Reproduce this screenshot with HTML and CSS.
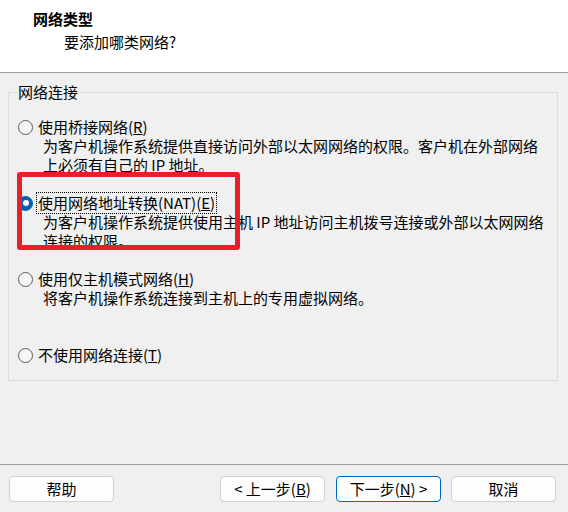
FILE: index.html
```html
<!DOCTYPE html>
<html lang="zh-CN">
<head>
  <meta charset="UTF-8">
  <meta name="viewport" content="width=device-width, initial-scale=1.0">
  <title>新建虚拟机向导 - 网络类型</title>
  <link rel="stylesheet" href="styles.css">
</head>
<body>
  <div class="dialog">
    <div class="header">
      <div class="title">网络类型</div>
      <div class="subtitle">要添加哪类网络?</div>
    </div>

    <div class="content">
      <fieldset class="group">
        <legend>网络连接</legend>

        <div class="option">
          <div class="choice"><span class="radio"></span><span class="label">使用桥接网络(<u>R</u>)</span></div>
          <p class="desc">为客户机操作系统提供直接访问外部以太网网络的权限。客户机在外部网络<br>上必须有自己的 IP 地址。</p>
        </div>

        <div class="option">
          <div class="choice"><span class="radio checked"></span><span class="label focused">使用网络地址转换(NAT)(<u>E</u>)</span></div>
          <p class="desc">为客户机操作系统提供使用主机 IP 地址访问主机拨号连接或外部以太网网络<br>连接的权限。</p>
          <div class="highlight"></div>
        </div>

        <div class="option">
          <div class="choice"><span class="radio"></span><span class="label">使用仅主机模式网络(<u>H</u>)</span></div>
          <p class="desc">将客户机操作系统连接到主机上的专用虚拟网络。</p>
        </div>

        <div class="option">
          <div class="choice"><span class="radio"></span><span class="label">不使用网络连接(<u>T</u>)</span></div>
        </div>
      </fieldset>
    </div>

    <div class="footer">
      <button class="btn">帮助</button>
      <div class="nav">
        <button class="btn">&lt; 上一步(<u>B</u>)</button>
        <button class="btn primary">下一步(<u>N</u>) &gt;</button>
        <button class="btn">取消</button>
      </div>
    </div>
  </div>
</body>
</html>
```

FILE: styles.css
```css
body {
  margin: 0;
  background: #f0f0f0;
  font-family: "Noto Sans CJK SC", "Noto Sans", sans-serif;
  font-size: 15px;
  line-height: 18px;
  color: #000;
}

.dialog {
  display: flex;
  flex-direction: column;
  height: 512px;
}

.header {
  height: 62px;
  padding-top: 10px;
  background: #fff;
  border-bottom: 1px solid #a0a0a0;
}

.title {
  padding-left: 33px;
  font-weight: bold;
}

.subtitle {
  margin-top: 5px;
  padding-left: 64px;
}

.content {
  flex: 1;
}

.group {
  margin: 10px 10px 0 8px;
  padding: 17px 8px 16px 8px;
  border: 1px solid #dcdcdc;
}

.group legend {
  padding: 0 1px;
}

.option {
  position: relative;
  min-height: 56px;
  margin-bottom: 20px;
}

.option:last-child {
  min-height: 0;
  margin-bottom: 0;
}

.choice {
  display: flex;
  align-items: center;
  height: 18px;
}

.radio {
  position: relative;
  box-sizing: border-box;
  width: 15px;
  height: 15px;
  margin-left: 1px;
  border: 1px solid #5c5c5c;
  border-radius: 50%;
  background: #f6f6f6;
}

.radio.checked {
  border-color: #005fb8;
  background: #005fb8;
}

.radio.checked::after {
  content: "";
  position: absolute;
  left: 3.5px;
  top: 3.5px;
  width: 6px;
  height: 6px;
  border-radius: 50%;
  background: #fff;
}

.label {
  display: inline-block;
  margin-left: 5px;
  white-space: nowrap;
}

.label.focused {
  outline: 1px dotted #000;
  outline-offset: 1px;
}

.desc {
  margin: 0;
  padding-left: 26px;
  line-height: 19px;
  white-space: nowrap;
}

.highlight {
  position: absolute;
  left: 0;
  top: -22px;
  width: 213px;
  height: 68px;
  border: 5px solid #e5202a;
  border-radius: 3px;
}

.footer {
  display: flex;
  align-items: flex-start;
  height: 36px;
  padding: 11px 12px 0 9px;
  border-top: 1px solid #a0a0a0;
}

.nav {
  display: flex;
  gap: 11px;
  margin-left: auto;
}

.nav .btn:last-child {
  margin-left: -1px;
}

.btn {
  width: 105px;
  height: 26px;
  padding: 0;
  border: 1px solid #d0d0d0;
  border-radius: 4px;
  background: #fdfdfd;
  font-family: inherit;
  font-size: 15px;
  line-height: 24px;
  color: #000;
}

.btn.primary {
  border-color: #0067c0;
}
```
